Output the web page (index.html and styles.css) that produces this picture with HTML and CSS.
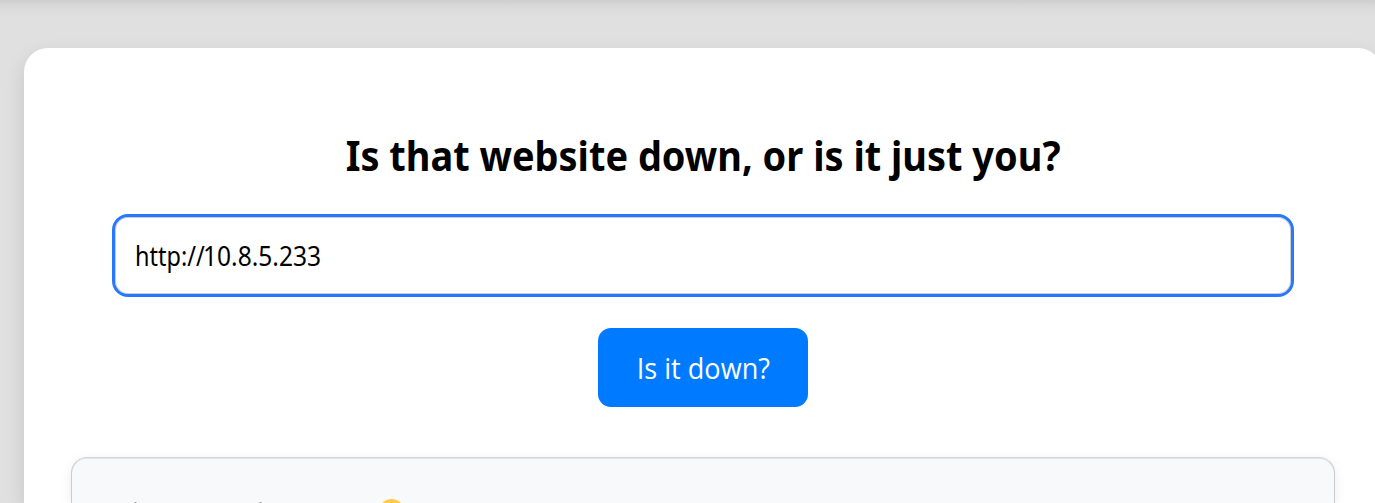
FILE: index.html
```html
<!DOCTYPE html>
<html lang="en">
<head>
<meta charset="utf-8">
<title>Is it down?</title>
<link rel="stylesheet" href="styles.css">
</head>
<body>
<main class="card">
  <h1 class="title"><span class="title-text">Is that website down, or is it just you?</span></h1>
  <form class="form">
    <div class="url" role="textbox" contenteditable="true" aria-label="Website"><span class="scheme">http://</span><span class="host">10.8.5.233</span></div>
    <button class="submit" type="button"><span class="submit-text">Is it down?</span></button>
  </form>
  <section class="result">
    <svg class="result-line" width="300" height="4" viewBox="0 0 300 4">
      <path d="M.5 3h2v1h-2zM125.5 3h2v1h-2z" fill="#999"/>
      <circle cx="257.5" cy="13" r="13" fill="#ffcb4c"/>
    </svg>
  </section>
</main>
</body>
</html>
```
FILE: styles.css
```css
* { box-sizing: border-box; }
html, body { height: 100%; }
body {
  margin: 0;
  padding: 48px 0 0 24px;
  overflow: hidden;
  background: linear-gradient(#cecece 0, #d8d8d8 6px, #dfdfdf 14px, #e0e0e0 20px);
  font-family: "Noto Sans", sans-serif;
  color: #000;
}
.card {
  width: 1358px;
  height: 455px;
  padding: 78px 47px 0;
  border-radius: 24px 24px 0 0;
  background: #fff;
  box-shadow: 0 8px 20px rgba(0, 0, 0, .12);
}
.title {
  margin: 0;
  height: 88px;
  line-height: 59px;
  font-size: 41.5px;
  font-weight: 700;
  text-align: center;
  white-space: nowrap;
}
.title-text {
  display: inline-block;
  transform: scaleX(.914);
}
.form {
  display: flex;
  flex-direction: column;
  align-items: center;
  padding: 0 41px;
}
.url {
  display: flex;
  align-items: center;
  width: 100%;
  height: 83px;
  padding: 0 20px;
  border: 3px solid #2878ff;
  border-radius: 16px;
  outline: none;
  background: #fff;
  box-shadow: inset 0 0 0 1px #ccc;
  color: #000;
  font-size: 26.7px;
  white-space: nowrap;
}
.scheme,
.host {
  display: block;
  transform-origin: left;
}
.scheme {
  width: 68px;
  transform: scaleX(.88);
}
.host { transform: scaleX(.92); }
.submit {
  width: 210px;
  height: 79px;
  margin-top: 31px;
  padding: 0;
  border: 0;
  border-radius: 13px;
  background: #007bff;
  color: #fff;
  font: 29px "Open Sans", sans-serif;
}
.submit-text {
  display: inline-block;
  transform: scaleX(.935);
}
.result {
  height: 46px;
  margin-top: 50px;
  padding: 41px 62px 0;
  border: 1px solid #ccc;
  border-top-color: #d5d5d5;
  border-bottom: 0;
  border-radius: 16px 16px 0 0;
  background: #f8f9fa;
  box-shadow: 0 3px 12px rgba(0, 0, 0, .08), inset 0 1px #e3e4e5;
}
.result-line { display: block; }
```
